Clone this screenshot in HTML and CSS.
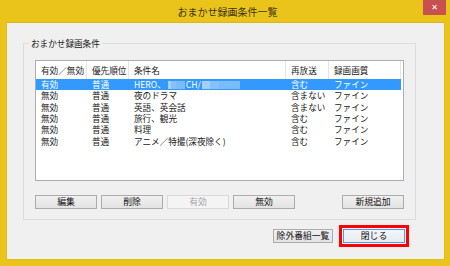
FILE: index.html
```html
<!DOCTYPE html>
<html lang="ja">
<head>
<meta charset="utf-8">
<link rel="stylesheet" href="styles.css">
</head>
<body>
<div class="window">
  <div class="titlebar">
    <div class="title">おまかせ録画条件一覧</div>
    <div class="close">✕</div>
  </div>
  <div class="client">
    <div class="group">
      <div class="group-label">おまかせ録画条件</div>
      <div class="list">
        <div class="row head">
          <div class="c c1">有効／無効</div>
          <div class="c c2">優先順位</div>
          <div class="c c3">条件名</div>
          <div class="c c4">再放送</div>
          <div class="c c5">録画画質</div>
        </div>
        <div class="row sel">
          <div class="c c1">有効</div>
          <div class="c c2">普通</div>
          <div class="c c3">HERO、<span class="blur b1"></span>CH/<span class="blur b2"></span></div>
          <div class="c c4">含む</div>
          <div class="c c5">ファイン</div>
        </div>
        <div class="row">
          <div class="c c1">無効</div>
          <div class="c c2">普通</div>
          <div class="c c3">夜のドラマ</div>
          <div class="c c4">含まない</div>
          <div class="c c5">ファイン</div>
        </div>
        <div class="row">
          <div class="c c1">無効</div>
          <div class="c c2">普通</div>
          <div class="c c3">英語、英会話</div>
          <div class="c c4">含まない</div>
          <div class="c c5">ファイン</div>
        </div>
        <div class="row">
          <div class="c c1">無効</div>
          <div class="c c2">普通</div>
          <div class="c c3">旅行、観光</div>
          <div class="c c4">含む</div>
          <div class="c c5">ファイン</div>
        </div>
        <div class="row">
          <div class="c c1">無効</div>
          <div class="c c2">普通</div>
          <div class="c c3">料理</div>
          <div class="c c4">含む</div>
          <div class="c c5">ファイン</div>
        </div>
        <div class="row">
          <div class="c c1">無効</div>
          <div class="c c2">普通</div>
          <div class="c c3">アニメ／特撮(深夜除く)</div>
          <div class="c c4">含む</div>
          <div class="c c5">ファイン</div>
        </div>
      </div>
      <div class="btnrow">
        <div class="btn">編集</div>
        <div class="btn">削除</div>
        <div class="btn disabled">有効</div>
        <div class="btn">無効</div>
        <div class="btn push">新規追加</div>
      </div>
    </div>
    <div class="bottomrow">
      <div class="btn wide">除外番組一覧</div>
      <div class="btn default">閉じる</div>
    </div>
  </div>
</div>
</body>
</html>
```

FILE: styles.css
```css
* { box-sizing: border-box; }
html, body { margin: 0; padding: 0; }
body {
  width: 450px;
  height: 266px;
  overflow: hidden;
  background: #ebc41b;
  font-family: "Noto Sans CJK JP", "Noto Sans", sans-serif;
  color: #1a1a1a;
}
.window {
  width: 450px;
  height: 266px;
  display: flex;
  flex-direction: column;
  padding: 0 5px 6px 6px;
}
.titlebar {
  height: 22px;
  display: flex;
  align-items: flex-start;
  position: relative;
}
.title {
  flex: 1;
  text-align: center;
  font-size: 10px;
  line-height: 24px;
  color: #3d3515;
  padding-left: 4px;
}
.close {
  position: absolute;
  right: -1px;
  top: 0;
  width: 23px;
  height: 15px;
  background: #c75050;
  color: #fff;
  font-size: 8px;
  line-height: 15px;
  text-align: center;
  font-family: "DejaVu Sans", sans-serif;
  font-weight: bold;
}
.client {
  flex: 1;
  background: #f0f0f0;
  padding: 20px 0 0 16px;
  border: 1px solid #e2bd1a;
  border-top-color: #d9b516;
}
.group {
  position: relative;
  width: 393px;
  border: 1px solid #dcdcdc;
  padding: 16px 11px 10px 11px;
}
.group-label {
  position: absolute;
  top: -7px;
  left: 5px;
  padding: 0 2px;
  background: #f0f0f0;
  font-size: 8.6px;
  line-height: 12px;
}
.list {
  height: 121px;
  background: #fff;
  border: 1px solid #abadb3;
  padding: 0;
}
.row {
  display: grid;
  grid-template-columns: 51px 42px 157px 43px 72px;
  height: 11.33px;
  font-size: 8.6px;
  line-height: 11.33px;
  width: 365px;
}
.row.head {
  height: 18px;
  line-height: 18px;
}
.row.head .c {
  border-right: 1px solid #e5e5e5;
}
.c {
  padding-left: 5px;
  white-space: nowrap;
  overflow: hidden;
}
.row.sel {
  background: #3399ff;
  color: #fff;
}
.blur {
  display: inline-block;
  height: 8px;
  vertical-align: -1px;
  background:
    linear-gradient(90deg, rgba(255,255,255,0.55) 0 20%, rgba(190,220,255,0.6) 20% 45%, rgba(255,255,255,0.35) 45% 70%, rgba(170,210,255,0.6) 70% 100%);
}
.b1 { width: 17px; margin: 0 1px 0 2px; }
.b2 { width: 38px; margin-left: 1px; }
.btnrow {
  display: flex;
  gap: 4px;
  margin-top: 14px;
}
.btn {
  width: 62px;
  height: 14px;
  background: linear-gradient(#f0f0f0, #e3e3e3);
  border: 1px solid #acacac;
  font-size: 8.8px;
  line-height: 12px;
  text-align: center;
  color: #111;
}
.btn.disabled {
  background: #f4f4f4;
  border-color: #d9d9d9;
  color: #a3a3a3;
}
.btn.push { margin-left: auto; }
.bottomrow {
  width: 393px;
  display: flex;
  justify-content: flex-end;
  gap: 10px;
  margin-top: 9px;
  padding-right: 11px;
}
.btn.wide { width: 60px; }
.btn.default {
  border-color: #5a9ad6;
  background: linear-gradient(#f3f6f9, #e7ecf1);
  outline: 3px solid #ff0000;
  outline-offset: 1px;
}
```
